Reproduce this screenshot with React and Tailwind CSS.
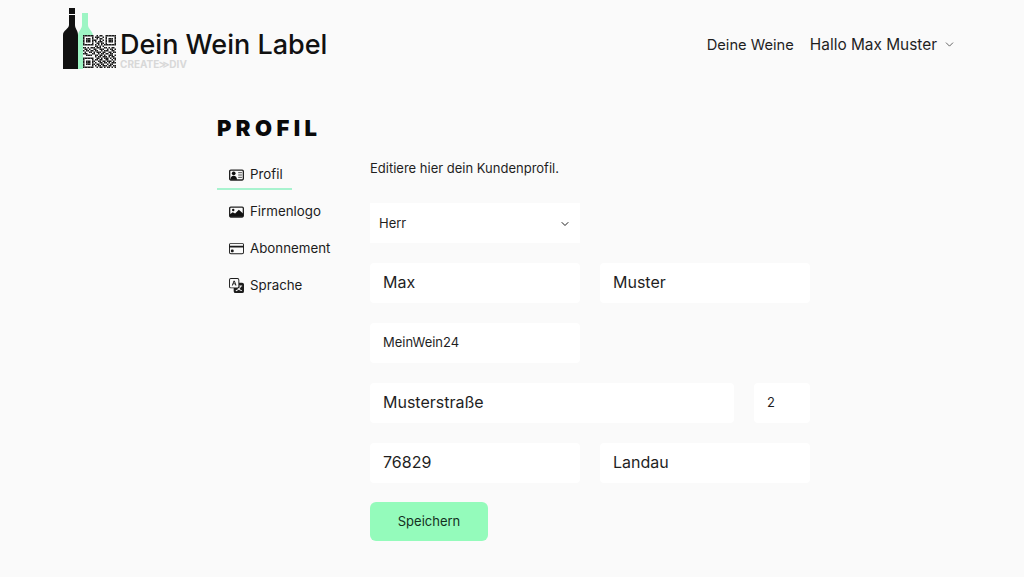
import React from 'react';
import { ChevronDown } from 'lucide-react';
import { BsCreditCard, BsTranslate } from 'react-icons/bs';

// finder pattern + noise cells for the little QR code in the logo
const QR_ROWS = [
    '1111111001011001111111',
    '1000001011100101000001',
    '1011101001011001011101',
    '1011101110010101011101',
    '1011101010111001011101',
    '1000001001101101000001',
    '1111111010101011111111',
    '0000000011010100000000',
    '1101011101110011010110',
    '0110100110011100101101',
    '1011011011001011100110',
    '0100110101110110011011',
    '1110001100101101101100',
    '0011110011011010011101',
    '0000000010110111010110',
    '1111111001101011101011',
    '1000001011011001100101',
    '1011101100110110111010',
    '1011101010011011010111',
    '1011101101101100101100',
    '1000001010110111011011',
    '1111111001011010110101',
];

function Logo() {
    return (
        <div className="flex items-start">
            <svg width="56" height="62" viewBox="0 0 56 62" className="shrink-0">
                {/* green bottle behind */}
                <path d="M19 5h6v12c0 4 4 5 5 10v34H15V27c1-5 4-6 4-10z" fill="#9df5c4" />
                {/* black bottle */}
                <path d="M6 0h6v17c0 4 3 5 3 10v34H0V27c0-5 6-6 6-10z" fill="#111111" />
                <rect x="6" y="6" width="6" height="1" fill="#fafafa" />
                <rect x="20" y="27" width="36" height="35" fill="#fafafa" />
                <g fill="#1a1a1a">
                    {QR_ROWS.map((row, y) =>
                        row.split('').map((c, x) =>
                            c === '1' ? <rect key={`${x}-${y}`} x={20 + x * 1.5} y={27 + y * 1.5} width="1.5" height="1.5" /> : null
                        )
                    )}
                </g>
            </svg>
            <div className="ml-[1px] mt-[23px]">
                <div className="text-[27px] leading-[28px] font-medium text-[#111111] whitespace-nowrap">Dein Wein Label</div>
                <div className="text-[10px] leading-[10px] font-bold text-[#d8d8d8] whitespace-nowrap">CREATE≫DIV</div>
            </div>
        </div>
    );
}

function IdCardIcon({ className }) {
    return (
        <svg viewBox="0 0 16 12" width="15" height="12" className={className}>
            <rect x="0.7" y="0.7" width="14.600" height="10.600" rx="1.200" fill="none" stroke="#222222" strokeWidth="1.400" />
            <circle cx="5" cy="4.200" r="2" fill="#111111" />
            <path d="M1.500 11c0-3 1.500-4.200 3.500-4.200S8.500 8 8.500 11z" fill="#111111" />
            <path d="M9.800 3.500h4M9.800 6h4M9.800 8.500h4" stroke="#444444" strokeWidth="1" />
        </svg>
    );
}

function PhotoIcon({ className }) {
    return (
        <svg viewBox="0 0 16 12" width="15" height="12" className={className}>
            <rect x="0.7" y="0.7" width="14.600" height="10.600" rx="1.200" fill="none" stroke="#222222" strokeWidth="1.400" />
            <circle cx="4.500" cy="3.800" r="1.300" fill="#111111" />
            <path d="M1 11V8.500l3-2.300 2.500 1.500L10.500 3.500 15 7.500V11z" fill="#111111" />
        </svg>
    );
}

function SideItem({ icon: Icon, label, active }) {
    return (
        <div className={`flex items-center gap-[6px] h-[37px] pl-3 text-[13.300px] text-[#1c1c1c] w-[130px] ${active ? 'relative' : ''}`}>
            <Icon className="text-[15px] shrink-0" />
            <span>{label}</span>
            {active && <div className="absolute left-0 bottom-[3px] h-[2px] w-[75px] bg-[#a8f3cf]" />}
        </div>
    );
}

function Field({ value, className = '', small }) {
    return (
        <div className={`h-10 bg-white rounded-sm flex items-center px-[13px] text-[#1f1f1f] ${small ? 'text-[13px]' : 'text-[16px] pb-[2px]'} ${className}`}>
            {value}
        </div>
    );
}

export default function App() {
    return (
        <div className="min-h-[577px] bg-[#fafafa] font-['Inter',sans-serif] overflow-hidden">
            <header className="flex items-start justify-between pt-2 pl-[63px] pr-[68px] h-[112px]">
                <Logo />
                <nav className="flex items-center gap-4 mt-[25px] text-[#1f1f1f]">
                    <span className="text-[14.700px]">Deine Weine</span>
                    <span className="flex items-center gap-[6px] text-[15.400px]">
                        Hallo Max Muster
                        <ChevronDown size={13} strokeWidth={1.25} />
                    </span>
                </nav>
            </header>

            <main className="pl-[217px]">
                <h1 className="text-[22px] leading-8 font-black tracking-[0.2em] text-[#0a0a0a] mb-[14px]">PROFIL</h1>
                <div className="flex">
                    <aside className="w-[153px] shrink-0 -mt-[2px]">
                        <SideItem icon={IdCardIcon} label="Profil" active />
                        <SideItem icon={PhotoIcon} label="Firmenlogo" />
                        <SideItem icon={BsCreditCard} label="Abonnement" />
                        <SideItem icon={BsTranslate} label="Sprache" />
                    </aside>
                    <div className="w-[440px]">
                        <p className="text-[13px] leading-5 text-[#1f1f1f] mb-[25px]">Editiere hier dein Kundenprofil.</p>
                        <div className="flex flex-col gap-5">
                            <div className="w-[210px] h-10 bg-white flex items-center justify-between px-[9px] pt-[1px] text-[13px] text-[#1f1f1f]">
                                Herr
                                <ChevronDown size={12} strokeWidth={2} />
                            </div>
                            <div className="flex gap-5">
                                <Field value="Max" className="flex-1" />
                                <Field value="Muster" className="flex-1" />
                            </div>
                            <Field value="MeinWein24" small className="w-[210px]" />
                            <div className="flex gap-5">
                                <Field value="Musterstraße" className="flex-1" />
                                <Field value="2" small className="w-[56px]" />
                            </div>
                            <div className="flex gap-5">
                                <Field value="76829" className="flex-1" />
                                <Field value="Landau" className="flex-1" />
                            </div>
                            <button className="w-[118px] h-[39px] -mt-[1px] rounded-md bg-[#94fbbb] text-[13px] text-[#14301f]">Speichern</button>
                        </div>
                    </div>
                </div>
            </main>
        </div>
    );
}
